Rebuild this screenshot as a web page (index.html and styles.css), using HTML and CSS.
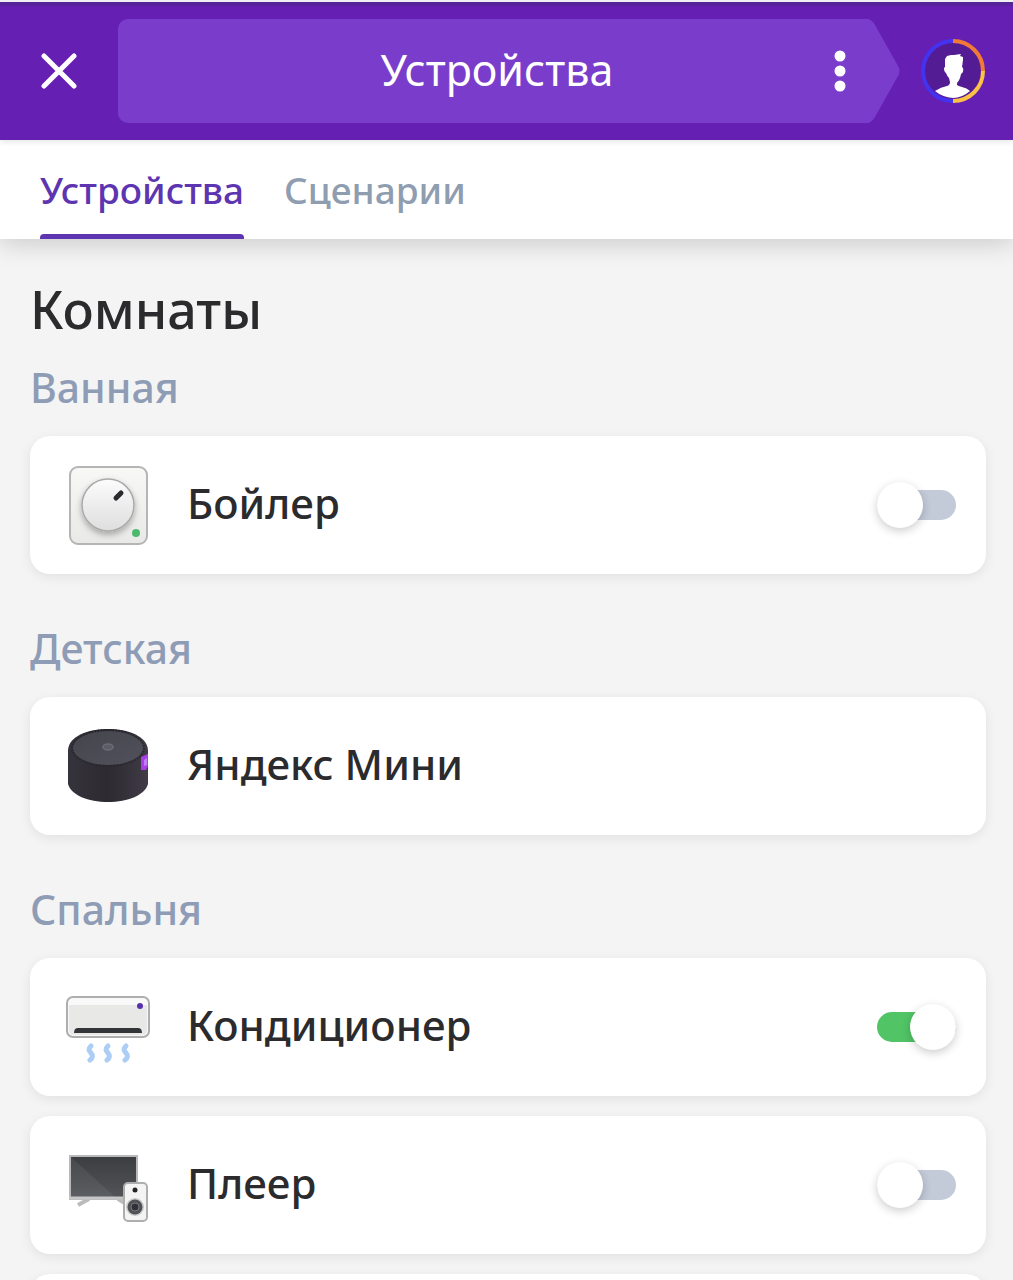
FILE: index.html
```html
<!DOCTYPE html>
<html lang="ru">
<head>
  <meta charset="UTF-8" />
  <meta name="viewport" content="width=device-width,initial-scale=1.0" />
  <title>Устройства</title>
  <link rel="stylesheet" href="styles.css">
</head>
<body>
  <header class="topbar">
    <button type="button" class="close-button" aria-label="Закрыть">
      <svg width="36" height="36" viewBox="0 0 36 36" fill="none" stroke="#fff" stroke-width="5" stroke-linecap="round">
        <path d="M3 3 33 33M33 3 3 33" />
      </svg>
    </button>
    <div class="title-bar">
      <span class="title">Устройства</span>
      <button type="button" class="menu-button" aria-label="Меню">
        <svg width="12" height="42" viewBox="0 0 12 42" fill="#fff">
          <circle cx="6" cy="6" r="5.5" /><circle cx="6" cy="21" r="5.5" /><circle cx="6" cy="36" r="5.5" />
        </svg>
      </button>
    </div>
    <svg class="title-tail" width="32" height="104" viewBox="0 0 32 104">
      <path d="M0 0Q4 1 7 6L30 47Q33 52 30 57L7 98Q4 103 0 104Z" fill="#7a3dcb" />
    </svg>
    <a href="#" class="avatar" aria-label="Профиль">
      <svg width="66" height="66" viewBox="0 0 66 66">
        <circle cx="33" cy="33" r="28" fill="#541c94" />
        <g fill="none" stroke-width="4">
          <path d="M33 3A30 30 0 0 0 33 63" stroke="#4432ee" />
          <path d="M33 3A30 30 0 0 1 63 33" stroke="#f17a35" />
          <path d="M63 33A30 30 0 0 1 33 63" stroke="#fbc244" />
        </g>
        <path d="M15 53Q21 49 27 48Q30 47 30 44L29 40Q27 38 26 35Q24 34 24 30L25 29V21L27 18L31 17H34L41 16L40 18L43 19V22L42 29L43 30Q44 34 41 36Q40 42 37 45V47Q38 48 42 49Q47 50 50 53Q42 60 33 60Q22 59 15 53Z" fill="#fff" />
      </svg>
    </a>
  </header>

  <nav class="tabs">
    <a href="#" class="tab tab-active">Устройства</a>
    <a href="#" class="tab">Сценарии</a>
  </nav>

  <main class="content">
    <h1>Комнаты</h1>

    <section class="room">
      <h2>Ванная</h2>
      <label class="device">
        <svg class="device-icon" viewBox="0 0 84 84">
          <defs>
            <linearGradient id="plate" x1="0" y1="0" x2="0" y2="1">
              <stop offset="0" stop-color="#f8f8f6" /><stop offset="1" stop-color="#e9e9e8" />
            </linearGradient>
            <linearGradient id="knob" x1="0" y1="0" x2="0" y2="1">
              <stop offset="0" stop-color="#fcfcfc" /><stop offset="1" stop-color="#dedede" />
            </linearGradient>
            <filter id="knobShadow" x="-30%" y="-30%" width="160%" height="160%">
              <feDropShadow dx="0" dy="3" stdDeviation="3" flood-opacity=".3" />
            </filter>
          </defs>
          <rect x="4" y="4" width="77" height="77" rx="8" fill="url(#plate)" stroke="#b5b5b5" stroke-width="2" />
          <circle cx="42" cy="42" r="26" fill="url(#knob)" stroke="#aaa" stroke-width="1.5" filter="url(#knobShadow)" />
          <path d="M50 35 55 30" stroke="#2c2c30" stroke-width="5" stroke-linecap="round" />
          <circle cx="70" cy="70" r="4" fill="#4dba6b" />
        </svg>
        <span class="device-name">Бойлер</span>
        <input type="checkbox" class="switch" />
      </label>
    </section>

    <section class="room">
      <h2>Детская</h2>
      <a href="#" class="device">
        <svg class="device-icon" viewBox="0 0 84 84">
          <defs>
            <linearGradient id="cloth" x1="0" y1="0" x2="1" y2="0">
              <stop offset="0" stop-color="#35333b" /><stop offset=".5" stop-color="#2d2a31" /><stop offset="1" stop-color="#403b46" />
            </linearGradient>
            <linearGradient id="lid" x1="0" y1="0" x2="1" y2="1">
              <stop offset="0" stop-color="#44454c" /><stop offset="1" stop-color="#50515a" />
            </linearGradient>
          </defs>
          <path d="M2 26C3 12 22 5 42 5S81 12 82 26V60C79 71 62 78 42 78S5 71 2 60Z" fill="url(#cloth)" />
          <ellipse cx="42" cy="24" rx="35" ry="17" fill="url(#lid)" />
          <ellipse cx="42" cy="24" rx="36" ry="18" fill="none" stroke="#28272d" stroke-width="2" stroke-dasharray="1.5 1.5" />
          <ellipse cx="42" cy="23" rx="5" ry="3" fill="#5b5c65" stroke="#6b6c75" stroke-width="1.5" />
          <path d="M75 33 82 30V42L80 46H75Z" fill="#a83ee8" />
          <path d="M78 36 81 34V41L78 42Z" fill="#c57af5" />
        </svg>
        <span class="device-name">Яндекс Мини</span>
      </a>
    </section>

    <section class="room">
      <h2>Спальня</h2>
      <label class="device">
        <svg class="device-icon" viewBox="0 0 84 84">
          <rect x="1" y="12" width="82" height="40" rx="6" fill="#f9f9f9" stroke="#aeaeae" stroke-width="2" />
          <path d="M3 20H81V44Q81 50 76 50H8Q3 50 3 44Z" fill="#e8e8e6" />
          <path d="M8 48Q8 43 12 43H72Q76 43 76 48Z" fill="#343539" />
          <circle cx="74" cy="21" r="3" fill="#5731ad" />
          <g fill="none" stroke="#accdf5" stroke-width="5" stroke-linecap="round">
            <path id="steam" d="M25 61C22 64 23 66 25 68C27 70 27 73 24 75" />
            <use href="#steam" x="17" />
            <use href="#steam" x="35" />
          </g>
        </svg>
        <span class="device-name">Кондиционер</span>
        <input type="checkbox" class="switch" checked />
      </label>
      <label class="device">
        <svg class="device-icon" viewBox="0 0 84 84">
          <defs>
            <linearGradient id="screen" x1="0" y1="0" x2="0" y2="1">
              <stop offset="0" stop-color="#3b3d41" /><stop offset="1" stop-color="#535559" />
            </linearGradient>
          </defs>
          <path d="M23 56 12 62M52 56 62 62" stroke="#bbb" stroke-width="4" />
          <rect x="4" y="13" width="67" height="43" fill="url(#screen)" stroke="#b9b9b9" stroke-width="2" />
          <path d="M5 14 49 54H5Z" fill="#fff" opacity=".06" />
          <path d="M3 55H72" stroke="#c6c6c6" stroke-width="3" />
          <rect x="58" y="40" width="23" height="38" rx="4" fill="#f4f4f4" stroke="#aeaeae" stroke-width="2" />
          <circle cx="69" cy="47" r="2.5" fill="#242428" />
          <circle cx="69" cy="64" r="9" fill="#c9c9c9" />
          <circle cx="69" cy="64" r="7.5" fill="#505156" />
          <circle cx="69" cy="64" r="4" fill="#303136" stroke="#77787c" stroke-width="1" />
        </svg>
        <span class="device-name">Плеер</span>
        <input type="checkbox" class="switch" />
      </label>
      <div class="device"></div>
    </section>
  </main>
</body>
</html>
```
FILE: styles.css
```css
*{box-sizing:border-box;}
body{
  display:flex;flex-direction:column;height:100vh;margin:0;
  font-family:"Noto Sans","Open Sans",sans-serif;
  background:#f4f4f4;color:#2b2b2d;
}
a{color:inherit;text-decoration:none;}
button{padding:0;border:none;background:none;cursor:pointer;}
svg{display:block;}

/* Header */
.topbar{
  position:relative;z-index:3;
  display:flex;align-items:center;flex:none;
  margin-top:2px;height:138px;padding-right:27px;
  background:#651fb2;
  box-shadow:inset 0 4px #57239a,0 2px 6px rgba(0,0,0,.1);
}
.close-button{display:flex;justify-content:center;align-items:center;width:118px;height:104px;}
.title-bar{
  position:relative;display:flex;flex:1;justify-content:center;align-items:center;
  height:104px;padding-left:8px;
  background:#7a3dcb;border-radius:10px 0 0 10px;
}
.title{padding-bottom:2px;color:#fff;font-size:43px;line-height:56px;}
.menu-button{position:absolute;top:0;right:10px;display:flex;justify-content:center;align-items:center;width:36px;height:104px;}
.title-tail{flex:none;margin-right:20px;}

/* Tabs */
.tabs{
  position:relative;z-index:2;
  display:flex;flex:none;gap:40px;height:99px;padding:0 40px;
  background:#fff;box-shadow:0 4px 24px rgba(0,0,0,.18);
}
.tab{
  position:relative;
  font-size:37px;font-weight:500;line-height:100px;color:#8f9db0;
}
.tab-active{color:#5e35b1;}
.tab-active::after{
  content:"";position:absolute;left:0;right:0;bottom:0;height:5px;
  background:#5e35b1;border-radius:4px 4px 0 0;
}

/* Rooms and devices */
.content{flex:1;min-height:0;overflow-y:auto;scrollbar-width:none;padding:40px 27px 0 30px;}
h1{margin:0 0 24px;font-size:52px;font-weight:500;line-height:60px;}
h2{margin:0 0 25px;font-size:41px;font-weight:500;line-height:48px;color:#8e9cb6;}
.room{display:flex;flex-direction:column;margin-bottom:50px;}
.device{
  display:flex;align-items:center;height:138px;padding:0 30px 0 36px;
  background:#fff;border-radius:20px;box-shadow:0 3px 12px rgba(0,0,0,.08);
}
.device + .device{margin-top:20px;}
.device-icon{flex:none;width:84px;height:84px;margin-right:37px;}
.device-name{flex:1;padding-bottom:4px;font-size:42px;font-weight:500;line-height:56px;}

.switch{
  appearance:none;position:relative;flex:none;
  width:79px;height:30px;margin:0;
  background:#c3cad8;border-radius:15px;cursor:pointer;
}
.switch::before{
  content:"";position:absolute;top:-8px;left:0;width:46px;height:46px;
  background:#fff;border-radius:50%;box-shadow:0 3px 10px rgba(0,0,0,.2);
}
.switch:checked{background:#51c466;}
.switch:checked::before{left:auto;right:0;}
```
